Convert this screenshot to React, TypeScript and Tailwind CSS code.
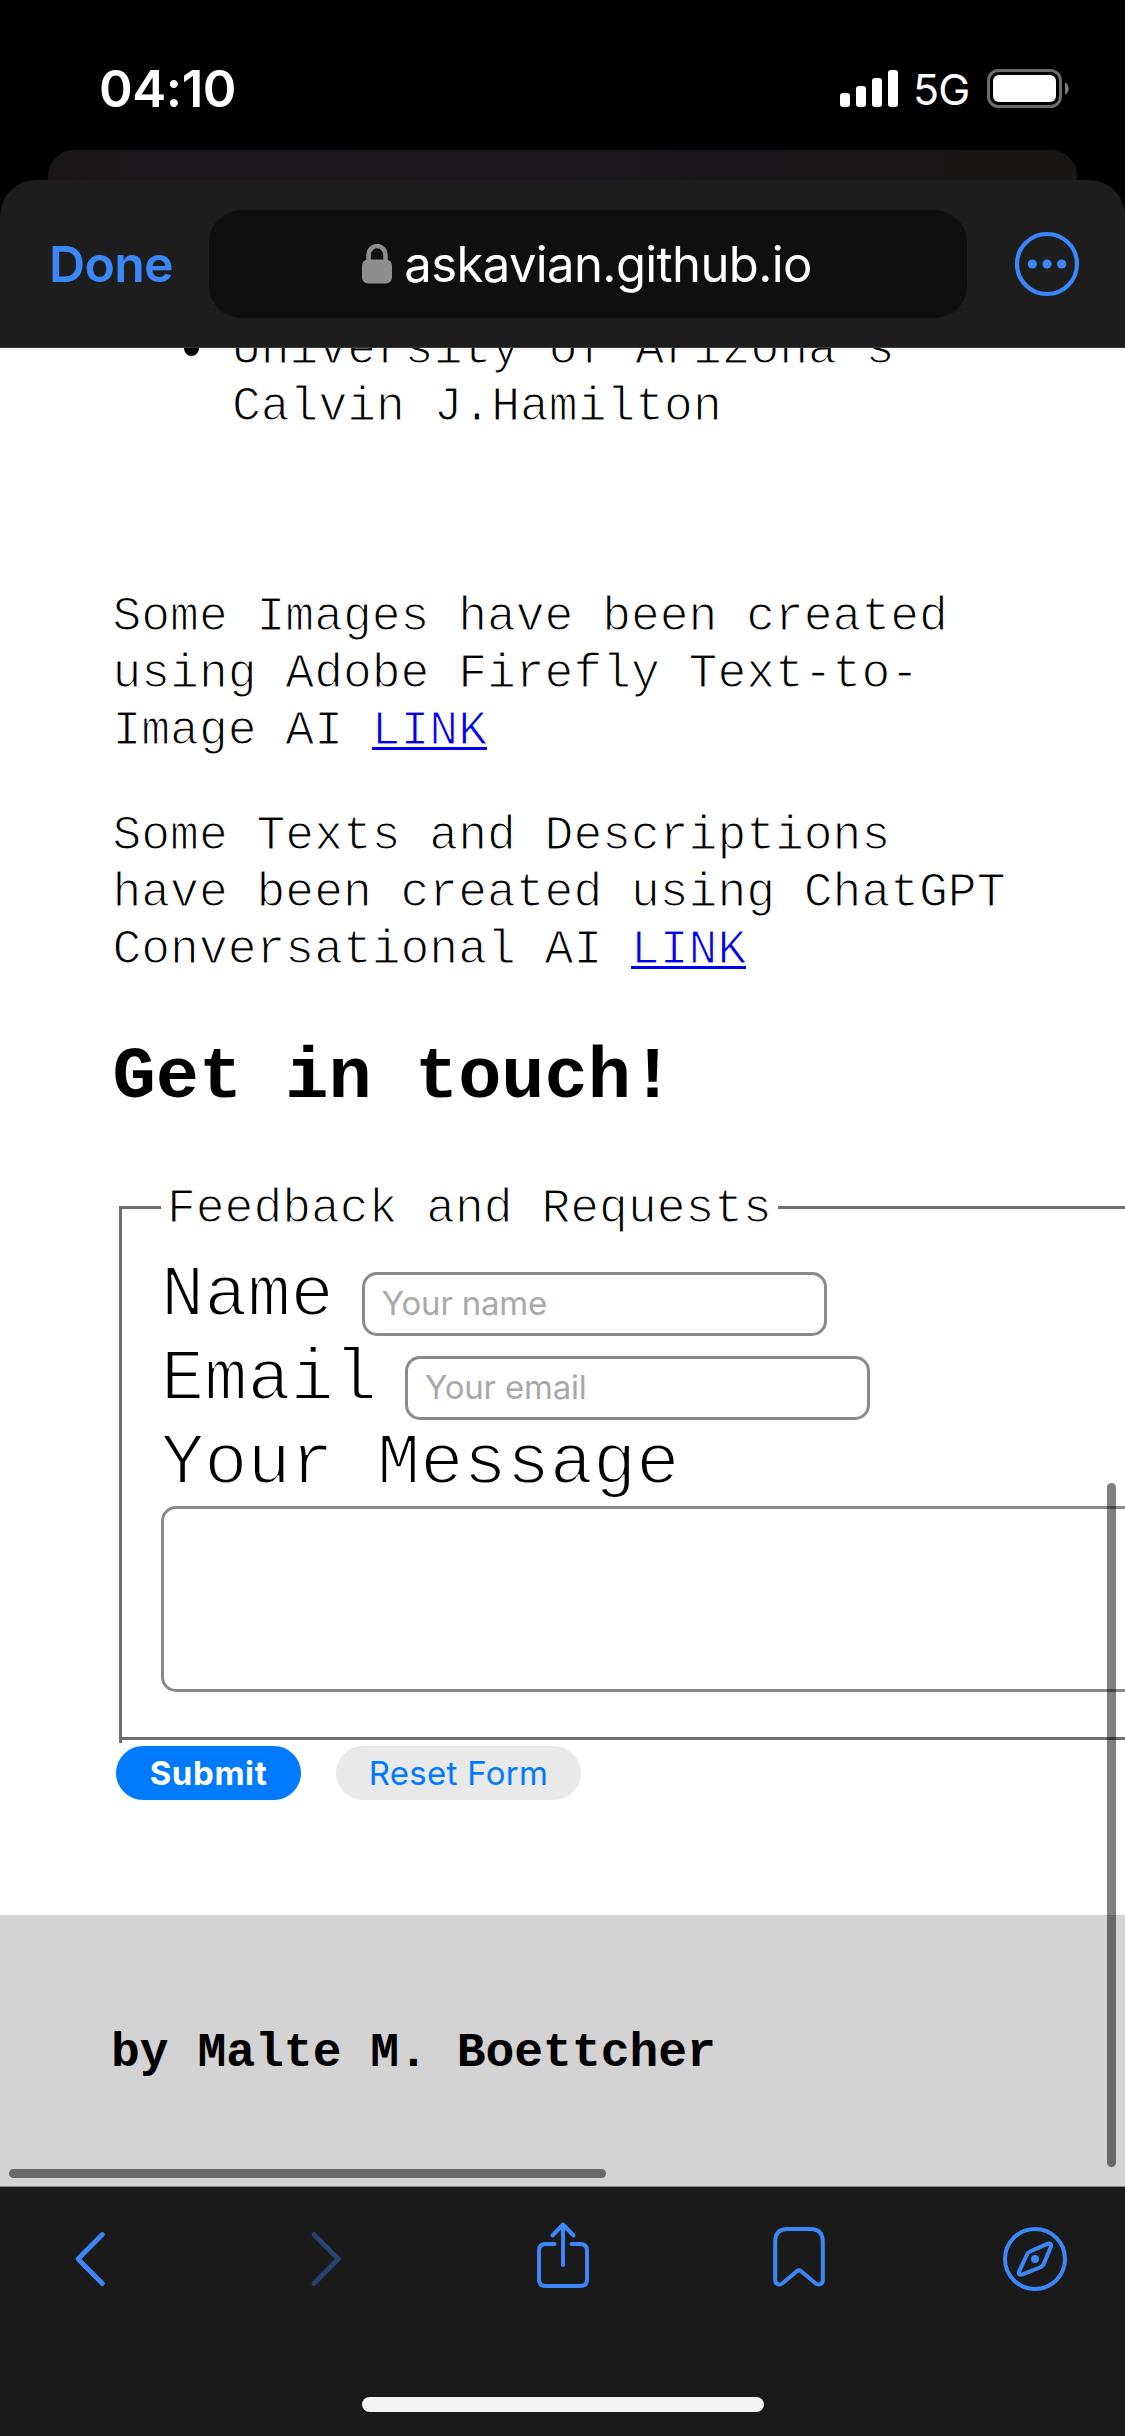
import React from "react";

const BLUE = "#3c87f7";

function StatusBar() {
  return (
    <div className="flex h-[150px] items-start justify-between pl-[99px] pr-[56px] font-['Inter',sans-serif] text-white">
      <div className="mt-[59px] text-[51px] leading-[60px] font-semibold tracking-[-0.4px]">04:10</div>
      <div className="mt-[69px] flex h-[39px] items-center">
        <svg width="58" height="39" viewBox="0 0 58 39" fill="#fff">
          <rect x="0" y="24" width="10" height="14" rx="3" />
          <rect x="16" y="17" width="10" height="21" rx="3" />
          <rect x="32" y="9" width="10" height="29" rx="3" />
          <rect x="48" y="1" width="10" height="37" rx="3" />
        </svg>
        <span className="mt-[2px] ml-[15px] w-[57px] text-[43px] leading-[39px] font-normal tracking-[-1px]">5G</span>
        <svg className="ml-[17px]" width="82" height="39" viewBox="0 0 82 39">
          <rect x="1.5" y="1.5" width="72" height="36" rx="10" fill="none" stroke="#6b6b6b" strokeWidth="3" />
          <rect x="6" y="6" width="63" height="27" rx="6" fill="#fff" />
          <path d="M78 13.5c5 2 5 10 0 12z" fill="#7a7a7a" />
        </svg>
      </div>
    </div>
  );
}

function Toolbar() {
  return (
    <div className="flex h-[168px] items-start rounded-t-[36px] border-b border-[#3a3a3a] bg-[#1d1d1d] pt-[30px] font-['Inter',sans-serif]">
      <div className="ml-[49px] w-[160px] text-[50px] leading-[108px] font-semibold tracking-[-0.7px] text-[#3c87f7]">Done</div>
      <div className="flex h-[108px] w-[758px] items-center justify-center rounded-[32px] bg-[#0f0f0f]">
        <svg className="-ml-[2px]" width="30" height="40" viewBox="0 0 30 40">
          <path d="M6.500 18v-6.500a8.500 9.500 0 0 1 17 0V18" fill="none" stroke="#8e8e8e" strokeWidth="4.500" />
          <rect x="0" y="15.500" width="30" height="24" rx="6" fill="#8e8e8e" />
        </svg>
        <span className="mt-[1px] ml-[12px] text-[49px] leading-[108px] tracking-[-0.6px] text-white">askavian.github.io</span>
      </div>
      <svg className="ml-[47px] mt-[21px]" width="66" height="66" viewBox="0 0 66 66">
        <circle cx="33" cy="33" r="30" fill="none" stroke={BLUE} strokeWidth="4.200" />
        <circle cx="18.300" cy="33" r="4.600" fill={BLUE} />
        <circle cx="33" cy="33" r="4.600" fill={BLUE} />
        <circle cx="47.700" cy="33" r="4.600" fill={BLUE} />
      </svg>
    </div>
  );
}

function Link() {
  return <a className="inline-block border-b-[3px] border-[#0000ee] leading-[32px] text-[#0000ee]">LINK</a>;
}

function Field({ label, placeholder }: { label: string; placeholder: string }) {
  return (
    <div className="flex h-[84px] items-start">
      <span className="text-[72px] leading-[84px] whitespace-pre [-webkit-text-stroke:2px_white]">{label}</span>
      <input
        className="mt-[18px] ml-[28px] h-[64px] w-[465px] rounded-[15px] border-[3px] border-[#8a898e] bg-white px-[17px] pb-[2px] font-['Inter',sans-serif] text-[33px] tracking-[-0.2px] placeholder:text-[#a9a9a9]"
        placeholder={placeholder}
      />
    </div>
  );
}

function PageContent() {
  return (
    <div className="relative h-[1838px] overflow-hidden bg-white font-['Liberation_Mono',monospace] text-black">
      <ul className="-mt-[26px] flex pl-[184px] text-[48px] leading-[57px] [-webkit-text-stroke:1.2px_white]">
        <li className="flex">
          <span className="mt-[19px] h-[15px] w-[15px] rounded-full bg-black" />
          <span className="ml-[33px]">
            University of Arizona's
            <br />
            Calvin J.Hamilton
          </span>
        </li>
      </ul>
      <div className="mt-[153px] pl-[112.500px] text-[48px] leading-[57px] [-webkit-text-stroke:1.2px_white]">
        <p>
          Some Images have been created
          <br />
          using Adobe Firefly Text-to-
          <br />
          Image AI <Link />
        </p>
        <p className="mt-[48px]">
          Some Texts and Descriptions
          <br />
          have been created using ChatGPT
          <br />
          Conversational AI <Link />
        </p>
      </div>
      <h2 className="mt-[58px] pl-[112.500px] text-[72px] leading-[82px] font-bold">Get in touch!</h2>

      <fieldset className="mt-[61px] ml-[119px] w-[1400px] border-t-[3px] border-l-[3px] border-[#6e6e6e] pb-[3px]">
        <legend className="ml-[39px] h-[54px] px-[6px] pt-[4px] text-[48px] leading-[50px] [-webkit-text-stroke:1.2px_white]">Feedback and Requests</legend>
        <div className="border-b-[3px] border-[#6e6e6e] pt-[20px] pb-[45px] pl-[39px]">
          <Field label="Name" placeholder="Your name" />
          <Field label="Email" placeholder="Your email" />
          <div className="text-[72px] leading-[84px] [-webkit-text-stroke:2px_white]">Your Message</div>
          <textarea className="block h-[186px] w-[1200px] resize-none rounded-[15px] border-[3px] border-[#8a898e] bg-white" />
        </div>
      </fieldset>

      <div className="mt-[3px] ml-[116px] flex gap-[35px] font-['Inter',sans-serif] text-[33px]">
        <button className="h-[54px] w-[185px] rounded-full bg-[#007aff] leading-[54px] font-bold tracking-[0.6px] text-white">Submit</button>
        <button className="h-[54px] w-[245px] rounded-full bg-[#e9e9e9] leading-[54px] tracking-[0.3px] text-[#007aff]">Reset Form</button>
      </div>

      <footer className="mt-[115px] h-[275px] bg-[#d3d3d3] pt-[110px] pl-[111px] text-[48px] leading-[57px] font-bold">
        by Malte M. Boettcher
      </footer>

      <div className="absolute right-[9px] bottom-[19px] h-[684px] w-[9px] rounded-full bg-black/50" />
      <div className="absolute bottom-[8px] left-[9px] h-[9px] w-[597px] rounded-full bg-black/50" />
    </div>
  );
}

function BottomBar() {
  return (
    <div className="flex h-[250px] flex-col items-center border-t border-[#8a8a8a] bg-[#1a1a1a]">
      <div className="flex w-full justify-between px-[54px] pt-[30px]">
        <svg width="72" height="84" viewBox="0 0 72 84" fill="none" stroke={BLUE} strokeWidth="4.800" strokeLinecap="round" strokeLinejoin="round">
          <path d="M48.300 17.500L24 42l24.300 24.500" />
        </svg>
        <svg width="72" height="84" viewBox="0 0 72 84" fill="none" stroke="#26426f" strokeWidth="4.800" strokeLinecap="round" strokeLinejoin="round">
          <path d="M24 17.500L48.300 42 24 66.500" />
        </svg>
        <svg width="72" height="84" viewBox="0 0 72 84" fill="none" stroke={BLUE} strokeWidth="4" strokeLinecap="round" strokeLinejoin="round">
          <path d="M27.500 27h-9q-6.500 0-6.500 6.500v29q0 6.500 6.500 6.500h35q6.500 0 6.500-6.500v-29q0-6.500-6.500-6.500h-9" />
          <path d="M36 48V7.500M25.500 18.500L36 7.500l10.500 11" />
        </svg>
        <svg width="72" height="84" viewBox="0 0 72 84" fill="none" stroke={BLUE} strokeWidth="4" strokeLinecap="round" strokeLinejoin="round">
          <path d="M24.500 12h23q12.300 0 12.300 13v38c0 4.500-4.300 5.700-7.300 3.200L38.200 54.300q-2.200-1.800-4.400 0L19.500 66.200c-3 2.500-7.300 1.300-7.300-3.200V25q0-13 12.300-13z" />
        </svg>
        <svg width="72" height="84" viewBox="0 0 72 84" fill="none" stroke={BLUE} strokeWidth="4" strokeLinejoin="round">
          <circle cx="36" cy="42" r="30" />
          <path d="M31 34.500L48.500 26.800q4.800-1.500 3.300 3.300L44.500 47.500q-.8 1.500-2.500 2.500L23.500 57.400q-4.800 1.500-3.300-3.300L28.500 36.500q.8-1.300 2.500-2z" />
          <circle cx="36" cy="42" r="4" fill={BLUE} stroke="none" />
        </svg>
      </div>
      <div className="mt-[96px] h-[15px] w-[402px] rounded-full bg-[#f4f4f4]" />
    </div>
  );
}

export default function App() {
  return (
    <div className="h-[2436px] w-[1125px] overflow-hidden bg-black">
      <StatusBar />
      <div className="mx-[48px] h-[70px] rounded-t-[26px] bg-gradient-to-r from-[#1a1618] via-[#1a161c] to-[#171613]" />
      <div className="relative -mt-[40px]">
        <Toolbar />
        <PageContent />
        <BottomBar />
      </div>
    </div>
  );
}
